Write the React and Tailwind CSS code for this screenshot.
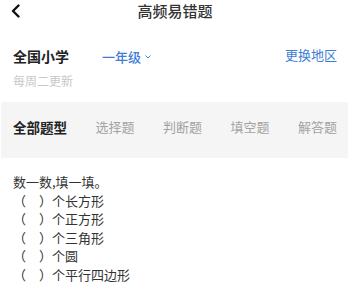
import React from "react";

const tabs = ["全部题型", "选择题", "判断题", "填空题", "解答题"];

const items = ["个长方形", "个正方形", "个三角形", "个圆", "个平行四边形"];

const font = { fontFamily: '"Noto Sans CJK SC", "Noto Sans", sans-serif' };

const App = () => {
  return (
    <div className="w-[350px] h-[284px] bg-white overflow-hidden" style={font}>
      {/* header */}
      <div className="relative h-[22px] flex items-center justify-center">
        <svg className="absolute left-[10px] top-[4px]" width="11" height="14" viewBox="0 0 11 14">
          <path d="M8.5 1.5 L3 7 L8.5 12.5" fill="none" stroke="#111" strokeWidth="2.4" strokeLinecap="round" strokeLinejoin="round" />
        </svg>
        <span className="text-[15px] leading-[22px] font-medium text-[#333]">高频易错题</span>
      </div>

      <div className="flex items-center pl-[13px] pr-[13px] mt-[24px] h-[20px]">
        <span className="text-[14px] leading-[20px] font-bold text-[#222]">全国小学</span>
        <div className="flex items-center ml-[33px] mt-[2px] text-[#3d7dd6]">
          <span className="text-[13px] leading-[16px] font-medium">一年级</span>
          <svg className="ml-[4px]" width="6" height="4" viewBox="0 0 6 4">
            <path d="M0.8 0.8 L3 3 L5.2 0.8" fill="none" stroke="#3d7dd6" strokeWidth="1" strokeLinecap="round" />
          </svg>
        </div>
        <span className="ml-auto text-[13px] leading-[16px] -mt-[3px] text-[#3d7dd6]">更换地区</span>
      </div>

      <div className="pl-[13px] mt-[7px] text-[12px] leading-[16px] text-[#c8c8c8]">每周二更新</div>

      {/* tabs */}
      <div className="mt-[13px] ml-[1px] mr-[2px] h-[56px] bg-[#f5f5f5] flex justify-between items-start pt-[15px] pl-[12px] pr-[11px]">
        {tabs.map((t, i) => (
          <span
            key={t}
            className={
              i === 0
                ? "text-[13.5px] leading-[20px] font-bold text-[#222]"
                : "text-[13px] leading-[20px] text-[#a3a3a3]"
            }
          >
            {t}
          </span>
        ))}
      </div>

      {/* question */}
      <div className="pl-[13px] pt-[15px] text-[13px] leading-[18.6px] text-[#333]">
        <div>数一数,填一填。</div>
        {items.map((it) => (
          <div key={it}>（　）{it}</div>
        ))}
      </div>
    </div>
  );
};

export default App;
